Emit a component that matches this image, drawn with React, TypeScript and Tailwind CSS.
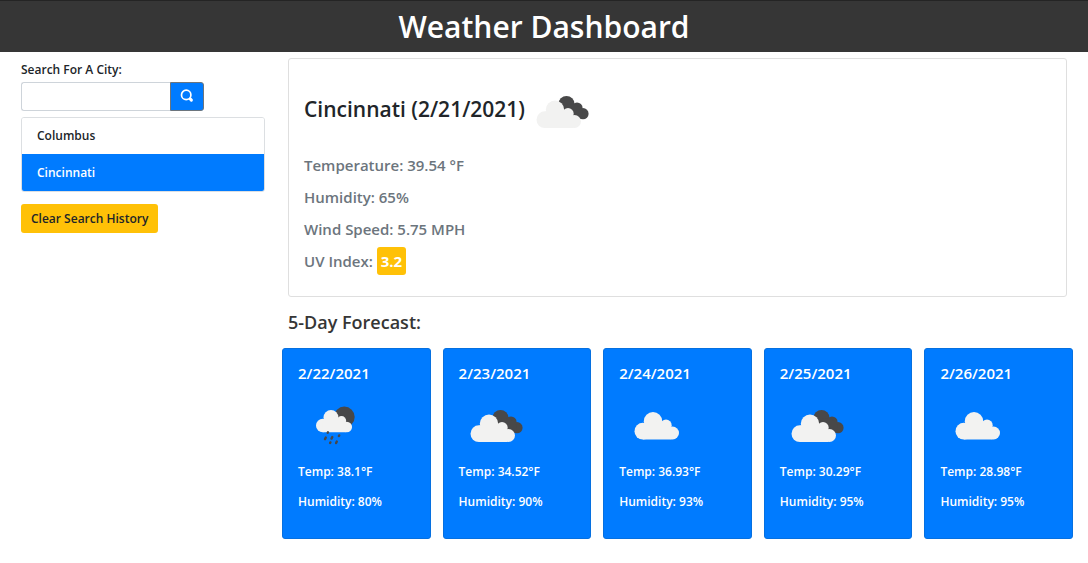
import { useState } from "react";

type Condition = "clouds" | "cloud" | "rain";

const history = ["Columbus", "Cincinnati"];

const forecast: { date: string; icon: Condition; temp: string; humidity: string }[] = [
  { date: "2/22/2021", icon: "rain", temp: "38.1", humidity: "80" },
  { date: "2/23/2021", icon: "clouds", temp: "34.52", humidity: "90" },
  { date: "2/24/2021", icon: "cloud", temp: "36.93", humidity: "93" },
  { date: "2/25/2021", icon: "clouds", temp: "30.29", humidity: "95" },
  { date: "2/26/2021", icon: "cloud", temp: "28.98", humidity: "95" },
];

function Cloud({ transform }: { transform?: string }) {
  return (
    <g fill="#f2f2f1" transform={transform}>
      <circle cx="8.4" cy="19.2" r="8.4" />
      <circle cx="18.5" cy="9.2" r="9.2" />
      <circle cx="31.5" cy="13.2" r="5.7" />
      <circle cx="38" cy="21" r="6.5" />
      <path d="M8.4 11 H10 L18 9 L31 12 L37 15 V27.5 H8.4 Z" />
    </g>
  );
}

function WeatherIcon({ condition }: { condition: Condition }) {
  return (
    <svg viewBox="0 0 76 76" className="size-[76px] shrink-0" aria-hidden="true">
      {condition === "clouds" && (
        <>
          <g fill="#484849">
            <circle cx="41.5" cy="30" r="8" />
            <circle cx="52" cy="34" r="5.6" />
            <circle cx="58" cy="39.7" r="5.6" />
            <path d="M42 30 L52 31 L58 38 L57 45 L45 42 Z" />
          </g>
          <Cloud transform="translate(11.5 26.5)" />
        </>
      )}
      {condition === "cloud" && <Cloud transform="translate(15.5 24)" />}
      {condition === "rain" && (
        <>
          <circle cx="46.3" cy="29" r="10.4" fill="#484849" />
          <Cloud transform="translate(18 22) scale(0.81)" />
          <g stroke="#484849" strokeWidth="2.4" strokeLinecap="round">
            <path d="M30 44.2 l-.3 .6" />
            <path d="M27.8 49.5 l-.8 1.6" />
            <path d="M34.3 49 l-.8 1.6" />
            <path d="M41.2 47.4 l-.3 .6" />
            <path d="M32.4 54.4 l-.3 .6" />
            <path d="M38.8 53.6 l-.7 1.5" />
          </g>
        </>
      )}
    </svg>
  );
}

export default function App() {
  const [city, setCity] = useState("Cincinnati");

  return (
    <div className="font-['Open_Sans',sans-serif] text-xs font-semibold text-[#212529]">
      <header className="border-t border-[#242424] bg-[#363636] py-1.5 text-center text-white">
        <h1 className="text-[30px] leading-[39px]">Weather Dashboard</h1>
      </header>

      <div className="flex gap-[23px] px-[21px] pt-1.5">
        <aside className="w-[244px] shrink-0">
          <form onSubmit={(e) => e.preventDefault()}>
            <label htmlFor="city" className="block py-[3px] leading-[18px]">
              Search For A City:
            </label>
            <div className="flex h-[29px]">
              <input
                id="city"
                type="text"
                className="w-[149px] rounded-l-[3px] border border-r-0 border-[#ced4da] px-2 outline-none"
              />
              <button
                type="submit"
                aria-label="Search"
                className="flex w-[34px] items-center justify-center rounded-r-[3px] border border-[#6c757d] bg-[#007bff] text-white"
              >
                <svg viewBox="0 0 14 14" className="mb-0.5 size-3.5" fill="none" stroke="currentColor" aria-hidden="true">
                  <circle cx="6.2" cy="5.9" r="4.7" strokeWidth="1.7" />
                  <path d="M10.2 9.9 L11.4 11.1" strokeWidth="3" strokeLinecap="round" />
                </svg>
              </button>
            </div>
          </form>

          <div className="mt-1.5 overflow-hidden rounded-[3px] border border-[#dcdfe2]">
            {history.map((name) => (
              <button
                key={name}
                type="button"
                onClick={() => setCity(name)}
                className={
                  name === city
                    ? "block h-[37px] w-full bg-[#007bff] px-[15px] text-left text-white"
                    : "block h-9 w-full bg-white px-[15px] text-left"
                }
              >
                {name}
              </button>
            ))}
          </div>

          <button type="button" className="mt-3 h-[29px] rounded-[3px] bg-[#ffc107] px-2.5">
            Clear Search History
          </button>
        </aside>

        <main className="min-w-0 flex-1">
          <section className="rounded-[3px] border border-[#dfdfdf] px-[15px] pt-[15px] pb-[21px]">
            <div className="flex items-center">
              <h2 className="pb-1.5 text-[21px]">Cincinnati (2/21/2021)</h2>
              <WeatherIcon condition="clouds" />
            </div>
            <div className="flex flex-col gap-1 pt-px text-[15px] leading-7 text-[#6c757d]">
              <p>Temperature: 39.54 °F</p>
              <p>Humidity: 65%</p>
              <p>Wind Speed: 5.75 MPH</p>
              <p>
                UV Index:{" "}
                <span className="inline-block rounded-[3px] bg-[#ffc107] px-1 font-bold text-white">3.2</span>
              </p>
            </div>
          </section>

          <h3 className="mt-[11px] text-lg leading-7 text-[#363636]">5-Day Forecast:</h3>

          <div className="-mx-1.5 mt-3 grid grid-cols-5 gap-3">
            {forecast.map((day) => (
              <article
                key={day.date}
                className="rounded-[3px] border border-[#0670e0] bg-[#007bff] px-[15px] pt-3.5 pb-7 text-white"
              >
                <h4 className="text-[15px] leading-5">{day.date}</h4>
                <div className="mt-[5px]">
                  <WeatherIcon condition={day.icon} />
                </div>
                <p className="leading-4">Temp: {day.temp}°F</p>
                <p className="mt-3.5 leading-4">Humidity: {day.humidity}%</p>
              </article>
            ))}
          </div>
        </main>
      </div>
    </div>
  );
}
